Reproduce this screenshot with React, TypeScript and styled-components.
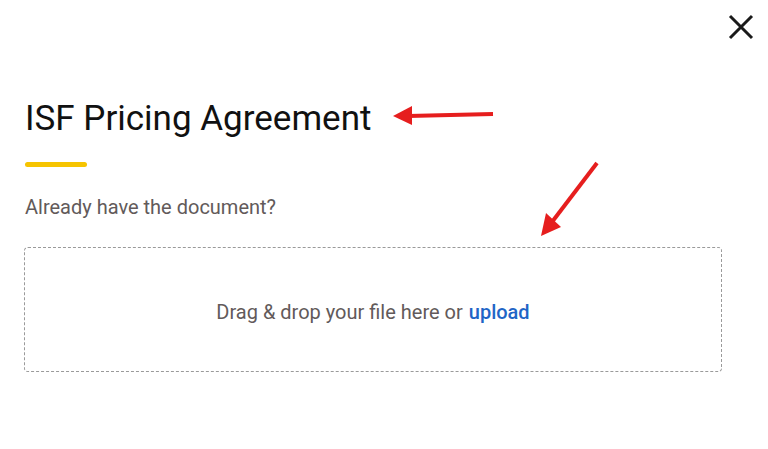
import React from "react";
import styled, { createGlobalStyle } from "styled-components";

const Global = createGlobalStyle`
  html, body { margin: 0; padding: 0; background: #fff; }
  body { font-family: Roboto, "Noto Sans", sans-serif; }
  * { box-sizing: border-box; }
`;

const Page = styled.div`
  position: relative;
  width: 768px;
  height: 449px;
  overflow: hidden;
  background: #fff;
`;

const CloseButton = styled.button`
  position: absolute;
  top: 12px;
  right: 12px;
  width: 30px;
  height: 30px;
  padding: 0;
  border: none;
  background: transparent;
  display: flex;
  align-items: center;
  justify-content: center;
  cursor: pointer;
`;

const Content = styled.div`
  display: flex;
  flex-direction: column;
  padding: 98px 46px 0 24px;
`;

const Title = styled.h1`
  margin: 0;
  padding-left: 1px;
  font-family: Roboto, sans-serif;
  font-weight: 400;
  font-size: 35px;
  line-height: 42px;
  color: #111;
`;

const Accent = styled.div`
  margin-top: 22px;
  margin-left: 1px;
  width: 62px;
  height: 5px;
  border-radius: 3px;
  background: #f6c400;
`;

const Prompt = styled.p`
  margin: 27px 0 0 1px;
  font-size: 20px;
  line-height: 26px;
  color: #625a5a;
`;

const DropZone = styled.div`
  margin-top: 27px;
  height: 125px;
  border: 1px dashed #9a9a9a;
  border-radius: 4px;
  display: flex;
  align-items: center;
  justify-content: center;
  font-size: 20px;
  line-height: 26px;
  padding-top: 4px;
  color: #625a5a;
`;

const Upload = styled.span`
  margin-left: 6px;
  color: #1f65c6;
  font-weight: 500;
`;

const Annotations = styled.svg`
  position: absolute;
  left: 0;
  top: 0;
  pointer-events: none;
`;

export default function App() {
  return (
    <Page>
      <Global />
      <CloseButton aria-label="Close">
        <svg width="26" height="26" viewBox="0 0 26 26">
          <path d="M2 2 L24 24 M24 2 L2 24" stroke="#1a1a1a" strokeWidth="3" strokeLinecap="butt" />
        </svg>
      </CloseButton>
      <Content>
        <Title>ISF Pricing Agreement</Title>
        <Accent />
        <Prompt>Already have the document?</Prompt>
        <DropZone>
          Drag &amp; drop your file here or<Upload>upload</Upload>
        </DropZone>
      </Content>
      <Annotations width="768" height="449" viewBox="0 0 768 449">
        <line x1="493" y1="114" x2="408" y2="116" stroke="#e61e1e" strokeWidth="4" />
        <polygon points="393,116 412,106 412,125" fill="#e61e1e" />
        <line x1="597" y1="163" x2="552" y2="222" stroke="#e61e1e" strokeWidth="4" />
        <polygon points="541,236 546,213 561,227" fill="#e61e1e" />
      </Annotations>
    </Page>
  );
}
